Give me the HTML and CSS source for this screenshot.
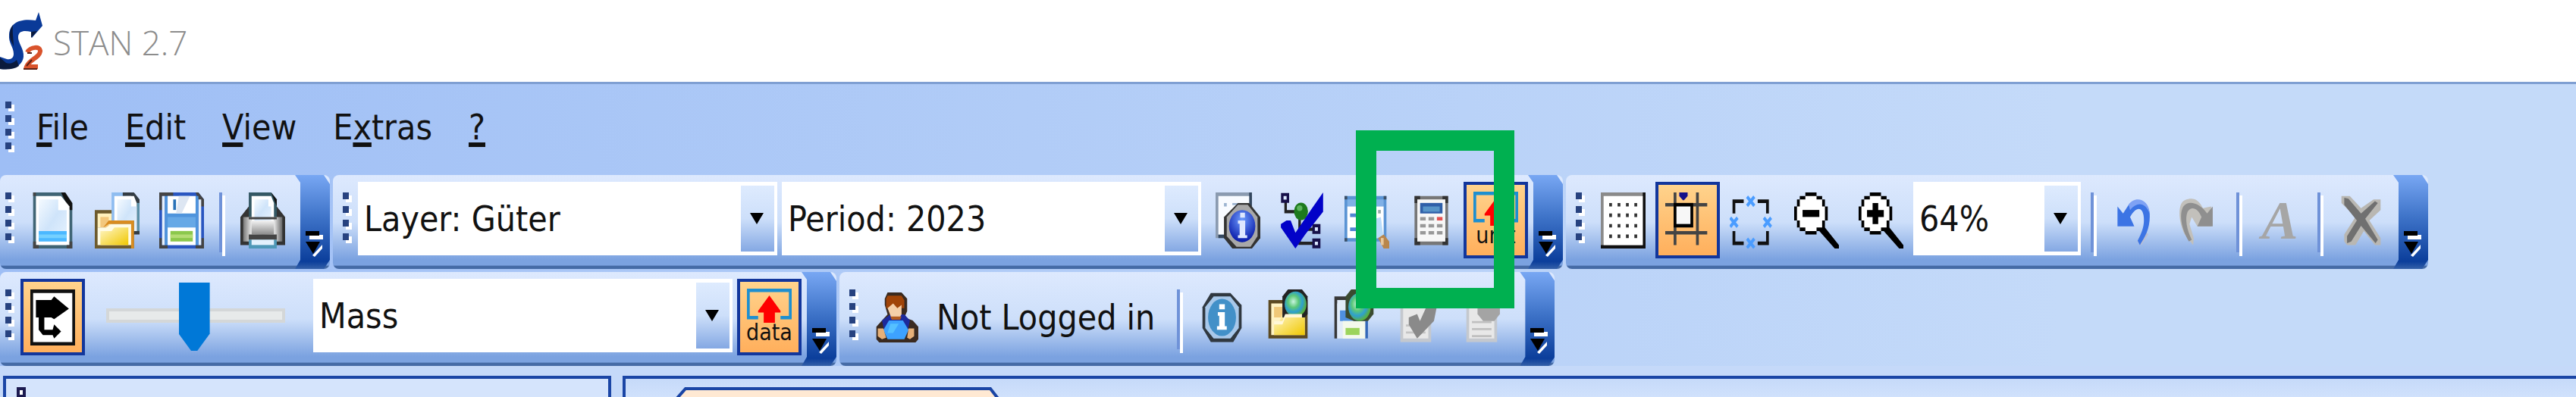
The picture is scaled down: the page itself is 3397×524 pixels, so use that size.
FILE: index.html
```html
<!DOCTYPE html>
<html lang="en">
<head>
<meta charset="utf-8">
<title>STAN 2.7</title>
<link rel="stylesheet" href="styles.css">
</head>
<body>
<svg class="defs" aria-hidden="true">
  <defs>
    <linearGradient id="paper" x1="0" y1="0" x2="1" y2="1"><stop offset="0" stop-color="#f4faff"/><stop offset=".5" stop-color="#cfe4fa"/><stop offset="1" stop-color="#e6f2fe"/></linearGradient>
    <linearGradient id="gold" x1="0" y1="0" x2="1" y2="1"><stop offset="0" stop-color="#fff6c8"/><stop offset="1" stop-color="#f0c800"/></linearGradient>
    <linearGradient id="metal" x1="0" y1="0" x2="0" y2="1"><stop offset="0" stop-color="#f4f4f4"/><stop offset="1" stop-color="#8c8c8c"/></linearGradient>
    <linearGradient id="steel" x1="0" y1="0" x2="1" y2="0"><stop offset="0" stop-color="#777"/><stop offset=".25" stop-color="#fff"/><stop offset=".5" stop-color="#bbb"/><stop offset=".75" stop-color="#fff"/><stop offset="1" stop-color="#666"/></linearGradient>
    <radialGradient id="globe" cx=".4" cy=".4" r=".6"><stop offset="0" stop-color="#c8f4e0"/><stop offset=".4" stop-color="#5cc878"/><stop offset=".7" stop-color="#2e9fd0"/><stop offset="1" stop-color="#58b040"/></radialGradient>
    <radialGradient id="orb" cx=".5" cy=".3" r=".7"><stop offset="0" stop-color="#6f9dff"/><stop offset="1" stop-color="#0718a8"/></radialGradient>
    <symbol id="more" viewBox="0 0 24 34" preserveAspectRatio="none"><path fill="#fff" d="M5 5h18v6H5zM9 32l13-14v5L12 34z"/><path fill="#000" d="M0 0h18v6H0zM0 14h19l-9 16z"/></symbol>
    <symbol id="frame-arrow" viewBox="0 0 16 10" preserveAspectRatio="none"><path fill="none" stroke="#1d8fd0" stroke-width="1" d="M4 8.500H.5V.5h15v8H12"/><path fill="#f00" d="M8 2l4 4.500v.5h-2v3H6V7H4v-.5z"/></symbol>
  </defs>
</svg>

<header class="titlebar">
  <svg class="logo" viewBox="0 0 56 76" preserveAspectRatio="none" aria-hidden="true">
    <path fill="#0a3a98" d="M51 0l5 18-14 16-1-8c-10-2-16-1-17 6-1 8 8 16 7 27-2 14-16 17-31 16V59l9 3c6 1 9-2 9-7 0-9-7-14-6-25C13 13 28 8 47 11z"/>
    <path fill="#0a1a3c" d="M0 60l8 7c5 2 10 0 14-4l3 8c-7 5-16 5-25 4zM17 17c-4 5-5 13-3 20l4 8c0-9-2-18-1-28zM41 26l8-1-8 9z"/>
    <path fill="none" stroke="#d9532c" stroke-width="6" d="M36 53c3-7 18-9 17-1-1 8-15 11-18 20h15"/>
    <path fill="none" stroke="#5a2015" stroke-width="2" d="M31 75h18M36 54h6M35 71l7-8"/>
  </svg>
  <h1 class="title">STAN 2.7</h1>
</header>

<div class="dock">
  <nav class="menubar" aria-label="Main menu">
    <span class="grip"></span>
    <div class="menu">
      <button type="button"><u>F</u>ile</button>
      <button type="button"><u>E</u>dit</button>
      <button type="button"><u>V</u>iew</button>
      <button type="button">E<u>x</u>tras</button>
      <button type="button"><u>?</u></button>
    </div>
  </nav>

  <div class="row row-top">
    <div class="toolbar" role="toolbar" aria-label="File">
      <span class="grip"></span>
      <button class="tool" type="button" aria-label="New">
        <svg viewBox="0 0 16 16" preserveAspectRatio="none"><path fill="#3f6474" d="M1 0h11l3 3v13H1z"/><path fill="#111" d="M11 0h1.500L15 3v2h-1z"/><path fill="#fff" d="M2 1h9l3 3v11H2z"/><path fill="url(#paper)" d="M3 2h7v3h3v9H3z"/><path fill="#fff" d="M10 1l4 4h-4z"/><path fill="#4bb8ff" d="M3 11h10v3H3z"/><path fill="#74d0ff" d="M3 12h10v1H3z"/><path fill="#444" d="M1 0h1v1H1zM1 15h2v1H1zM13 15h2v1h-2zM1 14h1v1H1zM14 14h1v1h-1z"/></svg>
      </button>
      <button class="tool" type="button" aria-label="Open">
        <svg viewBox="0 0 16 16" preserveAspectRatio="none"><path fill="#8fbdf0" d="M6 0h5v12H6z"/><path fill="#333c44" d="M10 0h4l2 2v10h-3V1h-3z"/><path fill="#5b90a8" d="M15 3h1v8h-1z"/><path fill="#fff" d="M7 1h7l1 2v8H7z"/><path fill="url(#paper)" d="M8 2h5v2h2v7H8z"/><path fill="#6d5a2c" d="M0 5h6v3h8v8H0z"/><path fill="#fff0bc" d="M1 6h5v4H1z"/><path fill="#f3c77c" d="M2 7h3v3H2z"/><path fill="#d98c20" d="M5 8h9v8h-1V9H5l-2 1z"/><path fill="#fffbe4" d="M1 10h3l2-1h7v6H1z"/><path fill="url(#gold)" d="M2 11h4l1-1h5v5H2z"/></svg>
      </button>
      <button class="tool" type="button" aria-label="Save">
        <svg viewBox="0 0 16 16" preserveAspectRatio="none"><path fill="#2a56c0" d="M0 0h14l2 2v14H0z"/><path fill="#444" d="M0 0h5v1H1v4H0zM13 0h1l2 2v2h-1zM0 13h1v2h2v1H0zM13 15h2v-2h1v3h-3z"/><path fill="#e5f0fc" d="M1 1h1v14H1zM14 2h1v13h-1z"/><path fill="#4f94dc" d="M2 1h12v14H2z"/><path fill="#fff" d="M3 1h10v5H3z"/><path fill="#dde6f2" d="M7 1h4L8 6H6z"/><path fill="#2a73b8" d="M5 2h1v3H5z"/><path fill="#66a8e6" d="M3 7h10v3H3z"/><path fill="#fff" d="M3 10h10v5H3z"/><path fill="#8cc84c" d="M4 11h8v3H4z"/><path fill="#b4dc74" d="M4 12h8v1H4z"/></svg>
      </button>
      <span class="sep"></span>
      <button class="tool" type="button" aria-label="Print">
        <svg viewBox="0 0 16 16" preserveAspectRatio="none"><path fill="#333" d="M2 5h12v2l2 2v6H0V7h1z"/><path fill="#333" d="M3 4h2v2h6V4h2l3 3v4H0V7z"/><path fill="#345864" d="M3 0h8l2 2v6H3z"/><path fill="#111" d="M11 0l2 2v2z"/><path fill="#fff" d="M4 1h7l1 2v5H4z"/><path fill="url(#paper)" d="M5 2h5v2h1v4H5z"/><path fill="url(#steel)" d="M1 7h3v1h8V7h3v7H1z"/><path fill="url(#metal)" d="M4 8h8v4H4z"/><path fill="#444" d="M3 7h10v.7H3zM3 12h10v1.500H3z"/><path fill="#4f98b8" d="M3 13.500h10V16H3z"/><path fill="#e4f1fd" d="M4 13.500h8V15H4z"/></svg>
      </button>
      <button class="more" type="button" aria-label="More file tools"><svg><use href="#more"/></svg></button>
    </div>

    <div class="toolbar" role="toolbar" aria-label="Model">
      <span class="grip"></span>
      <div class="combo"><select aria-label="Layer"><option>Layer: Güter</option></select></div>
      <div class="combo"><select aria-label="Period"><option>Period: 2023</option></select></div>
      <button class="tool" type="button" aria-label="Properties">
        <svg viewBox="0 0 16 16" preserveAspectRatio="none"><path fill="#8b9bb0" d="M0 0h12l1 1v4H9v8H0z"/><path fill="#33475e" d="M12 0h1v4h-1zM1 12h4v1H1z"/><path fill="#f8fbff" d="M1 1h11v3L5 12H1z"/><path fill="#9cb4d0" d="M3 3h1v1H3zM6 3h4v.6H6z"/><path fill="#333" d="M8 3h4l4 4v6l-3 3H6l-3-3V7z"/><path fill="#a8a8a8" d="M8 3.500h3.500L15 7v5.500l-2.500 3h-5L4 12.500V7z"/><ellipse cx="9.500" cy="9.600" rx="4.700" ry="4.600" fill="url(#orb)"/><path fill="#dfe8ff" d="M8.800 5.800h1.700v1.400H8.800zM8 8h2.600v4.200h.7v.8H8v-.8h.6V8.900H8z"/></svg>
      </button>
      <button class="tool" type="button" aria-label="Check model">
        <svg viewBox="0 0 16 16" preserveAspectRatio="none"><path fill="none" stroke="#222" stroke-width=".9" d="M2 2v3.500h4M7 6v4.500h5M7 11v3.500h5"/><path fill="#dce8ff" stroke="#17104a" stroke-width=".9" d="M.8.6h2v1.900h-2zM12 9.500h2v1.900h-2zM12 13.600h2v1.900h-2z"/><ellipse cx="7.500" cy="5.400" rx="2.500" ry="2.500" fill="#1d7a1d"/><ellipse cx="7" cy="4.500" rx="1" ry=".8" fill="#5cb45c"/><path fill="#0202c8" d="M15.400 0v5.500L9 12l-3.500 4L.3 10V9l2-1h1.500l1.700 3.500L11 5z"/></svg>
      </button>
      <button class="tool" type="button" aria-label="Data explorer">
        <svg viewBox="0 0 16 16" preserveAspectRatio="none"><path fill="#5a94d4" d="M0 1h15v13H0z"/><path fill="#3b5068" d="M0 1h1v1H0zM14 1h1v1h-1zM0 13h1v1H0z"/><path fill="#7fb0e6" d="M1 2h13v2H1z"/><path fill="#fff" d="M1 4h13v9H1z"/><path fill="#4f86d4" d="M2 6h5v1H2zM2 10h4v1H2z"/><path fill="#9aa" d="M12 5h1v1h-1z"/><path fill="#b9dcfa" d="M9 8l4-1 1 6H9z"/><path fill="#b8864c" d="M12 13l2-1 2 2v2h-2z"/><path fill="#e8c89c" d="M13 13h1v2h-1z"/></svg>
      </button>
      <button class="tool spotlit" type="button" aria-label="Calculate">
        <svg viewBox="0 0 16 16" preserveAspectRatio="none"><path fill="#777" d="M2 1h12v14H2z"/><path fill="#333" d="M2 1h2v1H3v1H2zM12 1h2v2h-1V2h-1zM2 13h1v1h1v1H2zM13 13h1v2h-2v-1h1z"/><path fill="#f7f7f7" d="M3 2h10v12H3z"/><path fill="#2f5fa8" d="M4 3h8v3H4z"/><path fill="#5794c8" d="M5 4h6v1.500H5z"/><path fill="#999" d="M4 7h2v1H4zM7 7h2v1H7zM4 9h2v1H4zM7 9h2v1H7zM10 9h2v1h-2zM4 11h2v1H4zM7 11h2v1H7zM10 11h2v1h-2z"/><path fill="#e65050" d="M10 7h2v1h-2z"/></svg>
        <span class="spotlight"></span>
      </button>
      <button class="tool tool-label on" type="button" aria-pressed="true"><svg><use href="#frame-arrow"/></svg><span>unit</span></button>
      <button class="more" type="button" aria-label="More model tools"><svg><use href="#more"/></svg></button>
    </div>

    <div class="toolbar" role="toolbar" aria-label="View">
      <span class="grip"></span>
      <button class="tool" type="button" aria-label="Show grid">
        <svg viewBox="0 0 16 16" preserveAspectRatio="none"><path fill="#8a8a8a" d="M0 0h16v16H0z"/><path fill="#111" d="M15 0h1v16H0v-1h15z"/><path fill="#fff" d="M1 1h14v14H1z"/><path fill="#333" d="M3 3h1v1H3zM6 3h1v1H6zM9 3h1v1H9zM12 3h1v1h-1zM3 6h1v1H3zM6 6h1v1H6zM9 6h1v1H9zM12 6h1v1h-1zM3 9h1v1H3zM6 9h1v1H6zM9 9h1v1H9zM12 9h1v1h-1zM3 12h1v1H3zM6 12h1v1H6zM9 12h1v1H9zM12 12h1v1h-1z"/></svg>
      </button>
      <button class="tool on" type="button" aria-pressed="true" aria-label="Snap to grid">
        <svg viewBox="0 0 16 16" preserveAspectRatio="none"><path fill="#444" d="M3 0h1v15H3zM11 0h1v15h-1zM0 3h15v1H0zM0 11h15v1H0z"/><path fill="#000" d="M3 3h7v7H3z"/><path fill="#f7f7f7" d="M4 4h5v5H4z"/><path fill="#15108a" d="M5 0h3v1L6.700 2.200h-.4L5 1z"/></svg>
      </button>
      <button class="tool" type="button" aria-label="Fit to window">
        <svg viewBox="0 0 16 16" preserveAspectRatio="none"><path fill="none" stroke="#111" stroke-width="1" d="M1.500 6V2.500H5M10 2.500h3.500V6M1.500 11v3.500H5M10 14.500h3.500V11"/><path fill="none" stroke="#4a9cff" stroke-width="1" d="M6.200 1.200l2.600 2.600M8.800 1.200L6.200 3.800M.2 7.200l2.600 2.600M2.800 7.200L.2 9.800M12.200 7.200l2.600 2.600M14.800 7.200l-2.600 2.600M6.200 13.200l2.600 2.600M8.800 13.200l-2.600 2.600"/></svg>
      </button>
      <button class="tool" type="button" aria-label="Zoom out">
        <svg viewBox="0 0 16 16" preserveAspectRatio="none"><path fill="#000" d="M4 0h4v1h2v1h1v2h1v4h-1v2l5 5v1h-1.500L9 11H8v1H4v-1H2v-1H1V8H0V4h1V2h1V1h2z"/><path fill="#fff" d="M4 1h4v1h2v2h1v4h-1v2H8v1H4v-1H2V8H1V4h1V2h2z"/><path fill="#000" d="M3 5h6v2H3z"/></svg>
      </button>
      <button class="tool" type="button" aria-label="Zoom in">
        <svg viewBox="0 0 16 16" preserveAspectRatio="none"><path fill="#000" d="M4 0h4v1h2v1h1v2h1v4h-1v2l5 5v1h-1.500L9 11H8v1H4v-1H2v-1H1V8H0V4h1V2h1V1h2z"/><path fill="#fff" d="M4 1h4v1h2v2h1v4h-1v2H8v1H4v-1H2V8H1V4h1V2h2z"/><path fill="#000" d="M3 5h2V3h2v2h2v2H7v2H5V7H3z"/></svg>
      </button>
      <div class="combo combo-small"><select aria-label="Zoom"><option>64%</option></select></div>
      <span class="sep"></span>
      <button class="tool" type="button" aria-label="Undo">
        <svg viewBox="0 0 16 16" preserveAspectRatio="none"><path fill="#b9bfd4" d="M9 14l3-3 1 1-2.500 3z"/><path fill="#3c74e4" d="M2 4l2 2 2-2.500C8 1.500 13 1.500 13.500 6c.3 4-1.500 6.500-3.500 9l-.8-1.200C11 11 11.800 9 11.300 6.500 10.800 4 8.500 4 6.500 7L8 9.700H2z"/><path fill="#7fa2f4" d="M6 3.500C8 1 13 1.500 13.500 6 12 2.800 9 2.500 6.500 5z"/></svg>
      </button>
      <button class="tool" type="button" aria-label="Redo" disabled>
        <svg viewBox="0 0 16 16" preserveAspectRatio="none"><path fill="#c2c0bb" d="M6 15l-3-3C.5 8 .5 3 3 2.200 6 1.200 8 2 9.500 4.500L12.500 4v5.700H7.500L5.500 7l-.8 2 1.500 4z"/><path fill="#8f8f8f" d="M13 4v5.700H7.500L9 7C7.500 4 5 4 4 5.500c-1 2-.3 5 1.500 8l-1 .5C1.500 10 1 6 2.500 4c1.700-2 6-1 8.500 2z"/></svg>
      </button>
      <span class="sep"></span>
      <button class="tool tool-font" type="button" aria-label="Font" disabled>A</button>
      <span class="sep"></span>
      <button class="tool" type="button" aria-label="Delete" disabled>
        <svg viewBox="0 0 16 16" preserveAspectRatio="none"><path fill="#b9b7b2" d="M1 1h3l4 3.500L12.500 2H15v3l-4 3 4 5v2h-2l-4-4-3 4H3l-1-1v-2l4-5-5-4z"/><path fill="#707070" d="M2 1.500l1.500.3L8 6l5-3.500 1 .5-4.500 4.500 4.500 6-.8 1L8 9.500 4.500 14l-1.500.5v-2L6.500 8 2 3.500z"/></svg>
      </button>
      <button class="more" type="button" aria-label="More view tools"><svg><use href="#more"/></svg></button>
    </div>
  </div>

  <div class="row">
    <div class="toolbar" role="toolbar" aria-label="Flows">
      <span class="grip"></span>
      <button class="tool on" type="button" aria-pressed="true" aria-label="Sankey arrows">
        <svg viewBox="0 0 16 16" preserveAspectRatio="none"><path fill="#111" d="M0 0h16v16H0z"/><path fill="#fff" d="M1 1h14v14H1z"/><path fill="#000" d="M2 3h5.500l1-1 5.300 3.500L8.500 8.500 7.500 8H5v3.500h3l.5-1.500 2.500 2-2.500 2-.5-1H4.500L3 11.500V8H2z"/></svg>
      </button>
      <input class="slider" type="range" min="0" max="100" value="49" aria-label="Flow width">
      <div class="combo"><select aria-label="Quantity"><option>Mass</option></select></div>
      <button class="tool tool-label on" type="button" aria-pressed="true"><svg><use href="#frame-arrow"/></svg><span>data</span></button>
      <button class="more" type="button" aria-label="More flow tools"><svg><use href="#more"/></svg></button>
    </div>

    <div class="toolbar toolbar-account" role="toolbar" aria-label="Account">
      <span class="grip"></span>
      <button class="login" type="button">
        <svg viewBox="0 -1 16 18" preserveAspectRatio="none"><path fill="#3a2a20" d="M5 0h5l2 2v4l-1 2 3 1 2 2v4l-1 1H2l-1-1v-4l2-2 2-2-1-3V2z"/><path fill="#1c2a9c" d="M3 9l3-2h5l2 2-1 4H4z"/><path fill="#a04408" d="M5 1h5l1 1.500V5H4.500V2z"/><path fill="#f4cfa8" d="M5 5l2-1.500L8.500 5 10 4v3L9 8.500H6.500z"/><path fill="#b35c20" d="M6 7.700h4l-.5 1h-3z"/><path fill="#3da2ff" d="M5.500 9h5l2 3-1.500 3H5l-1.500-3z"/><path fill="#55c0ff" d="M6 10h3l-2 3H5z"/><path fill="#e6b078" d="M1.500 11.500h2l1 3-1.500.5-1.500-1zM12.500 11.500h2v2.500l-1.500 1-1-.5z"/></svg>
        <span>Not Logged in</span>
      </button>
      <span class="sep"></span>
      <button class="tool" type="button" aria-label="Info">
        <svg viewBox="0 0 16 16" preserveAspectRatio="none"><path fill="#303840" d="M4 1h7l4 3.500V11l-3 4H4l-3-4V5z"/><path fill="#a8c8ea" d="M5 2h6l3 3v6l-3 3H5l-3-3V5z"/><ellipse cx="8" cy="8" rx="5" ry="5.300" fill="#4290c8"/><path fill="#fff" d="M7 4.200h2v1.500H7zM6.500 6.500H9v4h.7v1H6.200v-1H7v-3h-.5z"/></svg>
      </button>
      <button class="tool" type="button" aria-label="Open from server">
        <svg viewBox="0 0 16 16" preserveAspectRatio="none"><path fill="#5c4a22" d="M1 3h14v11H1z"/><path fill="#fff3c4" d="M2 4h12v9H2z"/><path fill="#f0c878" d="M3 5h3v3H3z"/><path fill="url(#gold)" d="M3 9h2l1-2h8v6H3z"/><path fill="#222" d="M8 0h5l2 2v5l-1 1H6V2z"/><ellipse cx="10.700" cy="4.200" rx="3.900" ry="3.600" fill="url(#globe)"/><path fill="#fff7d8" d="M3 9h3l1-2h6v1H7l-1 2H3z"/></svg>
      </button>
      <button class="tool" type="button" aria-label="Save to server">
        <svg viewBox="0 0 16 16" preserveAspectRatio="none"><path fill="#383838" d="M1 2h6v2H2v10H1z"/><path fill="#e2ecf8" d="M2 3h11v11H2z"/><path fill="#4f90e0" d="M3 6h10v3H3z"/><path fill="#3468b8" d="M12 9h1v5h-1z"/><path fill="#f4f9ec" d="M4 9h8v5H4z"/><path fill="#9cd45c" d="M5 11h5v2H5z"/><path fill="#3a4a30" d="M7 0h6l2 3v4l-2 2H8L5 8V2z"/><ellipse cx="10" cy="5" rx="4" ry="4" fill="url(#globe)"/></svg>
      </button>
      <button class="tool" type="button" aria-label="Validate" disabled>
        <svg viewBox="0 0 16 16" preserveAspectRatio="none"><path fill="#c4c8ce" d="M1 1h11v14H1z"/><path fill="#e8e8e8" d="M2 2h9v12H2z"/><path fill="#c4c4c4" d="M3 10h7v.6H3zM3 12h7v.6H3z"/><path fill="#8a8a8a" d="M12 2l2 3-1 4-6 5-3-4V8l3-1 1 2z"/></svg>
      </button>
      <button class="tool" type="button" aria-label="Report" disabled>
        <svg viewBox="0 0 16 16" preserveAspectRatio="none"><path fill="#c4c8ce" d="M1 1h11v14H1z"/><path fill="#e8e8e8" d="M2 2h9v12H2z"/><path fill="#c0c0c0" d="M3 9h7v.6H3zM3 11h7v.6H3zM3 13h7v.6H3z"/><path fill="#a4a4a4" d="M5 2h8v5l-2 2H7L5 7z"/></svg>
      </button>
      <button class="more" type="button" aria-label="More account tools"><svg><use href="#more"/></svg></button>
    </div>
  </div>
</div>

<main class="workspace">
  <aside class="panel panel-side"><span class="pin"></span></aside>
  <section class="panel panel-main">
    <svg class="tab" viewBox="0 0 434 16" preserveAspectRatio="none" aria-hidden="true"><path fill="#ffe9d3" stroke="#1a45a5" stroke-width="4" d="M0 20L16 2h402l14 18"/></svg>
  </section>
</main>
</body>
</html>
```
FILE: styles.css
```css
* {
  box-sizing: border-box;
}

body {
  margin: 0;
  height: 100vh;
  display: flex;
  flex-direction: column;
  overflow: hidden;
  background: #fff;
  color: #111;
  font-family: "DejaVu Sans Condensed", "Noto Sans", sans-serif;
  font-size: 46px;
}

button,
select {
  margin: 0;
  padding: 0;
  border: 0;
  background: none;
  color: inherit;
  font: inherit;
}

.defs {
  position: absolute;
  width: 0;
  height: 0;
}

/* Title bar */
.titlebar {
  display: flex;
  align-items: center;
  gap: 14px;
  flex: none;
  height: 108px;
}

.logo {
  width: 56px;
  height: 76px;
}

.title {
  margin: 0;
  padding-top: 4px;
  color: #8c8c8c;
  font-family: "Open Sans", "Noto Sans", sans-serif;
  font-size: 44px;
  font-weight: 300;
  line-height: 60px;
}

/* Docking area */
.dock {
  flex: none;
  border-top: 3px solid #7f9fd2;
  background: linear-gradient(90deg, #9ebef5 0, #c4daf9 80%);
}

.menubar {
  display: flex;
  align-items: flex-start;
  height: 120px;
  padding-top: 23px;
}

.menu {
  display: flex;
  gap: 48px;
  padding: 4px 0 0 21px;
}

.menu button {
  line-height: 60px;
}

.menu u {
  text-decoration-thickness: 6px;
  text-underline-offset: 4px;
  text-decoration-skip-ink: none;
}

.row {
  display: flex;
  gap: 4px;
  padding-bottom: 4px;
}

.row-top {
  position: relative;
  z-index: 1;
}

.row:last-child {
  padding-bottom: 0;
}

.toolbar {
  display: flex;
  align-items: flex-start;
  height: 124px;
  padding-top: 9px;
  border-radius: 8px;
  background: linear-gradient(#dde9fe 0, #cddffa 50%, #7ba2e0 90%, #7ba2e0 96%, #456ba6 97%);
}

.toolbar-account {
  gap: 2px;
}

.grip {
  flex: none;
  width: 12px;
  height: 70px;
  margin: 14px 8px 0 13px;
  background:
    repeating-linear-gradient(#27427f 0 9px, transparent 9px 18px) 0 0 / 8px 66px no-repeat,
    repeating-linear-gradient(#fff 0 9px, transparent 9px 18px) 4px 4px / 8px 66px no-repeat;
}

.menubar .grip,
.toolbar:first-child .grip {
  margin-left: 7px;
}

.menubar .grip {
  margin-top: 0;
}

.sep {
  flex: none;
  width: 22px;
  height: 84px;
  margin-top: 14px;
  background:
    linear-gradient(#6f92d8, #6f92d8) 7px 0 / 4px 79px no-repeat,
    linear-gradient(#fff, #fff) 11px 4px / 4px 80px no-repeat;
}

.tool {
  display: flex;
  align-items: center;
  justify-content: center;
  flex: none;
  width: 85px;
  height: 101px;
}

.tool svg,
.login svg {
  flex: none;
  width: 59px;
  height: 74px;
}

.tool.on {
  border: 4px solid #12369c;
  background: linear-gradient(#ffd38c, #ffaf5c);
}

.tool-label {
  flex-direction: column;
}

.tool-label svg {
  height: 45px;
}

.tool-label span {
  height: 30px;
  font-size: 30px;
  line-height: 26px;
}

.tool-font {
  color: #a6a6a6;
  font-family: "Liberation Serif", serif;
  font-size: 72px;
  font-style: italic;
  font-weight: bold;
  line-height: 92px;
}

.more {
  display: flex;
  align-items: flex-start;
  flex: none;
  width: 46px;
  height: 124px;
  margin-top: -9px;
  padding: 74px 0 0 14px;
  background: linear-gradient(#78a7f3, #3e73c8 45%, #0b3e9b 92%, #3460a8);
  clip-path: polygon(0 0, 38px 0, 100% 12px, 100% 112px, 38px 100%, 0 100%, 7px 112px, 7px 10px);
}

.more svg {
  flex: none;
  width: 24px;
  height: 34px;
}

/* Drop-downs */
.combo {
  position: relative;
  flex: none;
  width: 553px;
  height: 97px;
  margin-right: 6px;
  background: #fff;
}

.combo-small {
  width: 221px;
}

.combo select {
  width: 100%;
  height: 100%;
  padding: 0 50px 0 8px;
  appearance: none;
}

.combo::before,
.combo::after {
  content: "";
  position: absolute;
  pointer-events: none;
}

.combo::before {
  top: 5px;
  right: 4px;
  bottom: 5px;
  width: 44px;
  background: linear-gradient(#deebfe, #cddffa 50%, #84a8e3);
}

.combo::after {
  top: 41px;
  right: 18px;
  border: 9px solid transparent;
  border-top: 15px solid #000;
  border-bottom: 0;
}

/* Flow width slider */
.slider {
  flex: none;
  width: 236px;
  height: 97px;
  margin: 0 37px 0 28px;
  appearance: none;
  background: none;
}

.slider::-webkit-slider-runnable-track {
  height: 19px;
  border: 4px solid #d4d7d8;
  background: #e7eaea;
}

.slider::-webkit-slider-thumb {
  width: 41px;
  height: 90px;
  margin-top: -38px;
  appearance: none;
  background: #0078d7;
  clip-path: polygon(0 0, 100% 0, 100% 75%, 60% 100%, 40% 100%, 0 75%);
}

.login {
  display: flex;
  align-items: center;
  gap: 24px;
  height: 101px;
  padding: 0 20px 0 10px;
  white-space: nowrap;
}

/* Highlight over the calculate button */
.spotlit {
  position: relative;
}

.spotlight {
  position: absolute;
  top: -68px;
  left: -57px;
  width: 209px;
  height: 235px;
  border: 27px solid #00b050;
  z-index: 1;
  pointer-events: none;
}

/* Work area */
.workspace {
  display: flex;
  flex: 1;
  gap: 15px;
  min-height: 0;
  padding: 13px 0 0 4px;
  background: #c5d9f9;
}

.panel {
  border: 4px solid #1a45a5;
  border-bottom: 0;
}

.panel-side {
  flex: none;
  width: 802px;
  padding: 11px 0 0 14px;
  background: #d5e4fc;
}

.panel-main {
  flex: 1;
  padding: 11px 0 0 63px;
  border-right: 0;
  background: linear-gradient(#c6daf9, #d0e1fc);
}

.pin {
  display: block;
  width: 12px;
  height: 14px;
  border: 4px solid #1c1a50;
  background: #fff;
}

.tab {
  display: block;
  width: 434px;
  height: 16px;
}
```
